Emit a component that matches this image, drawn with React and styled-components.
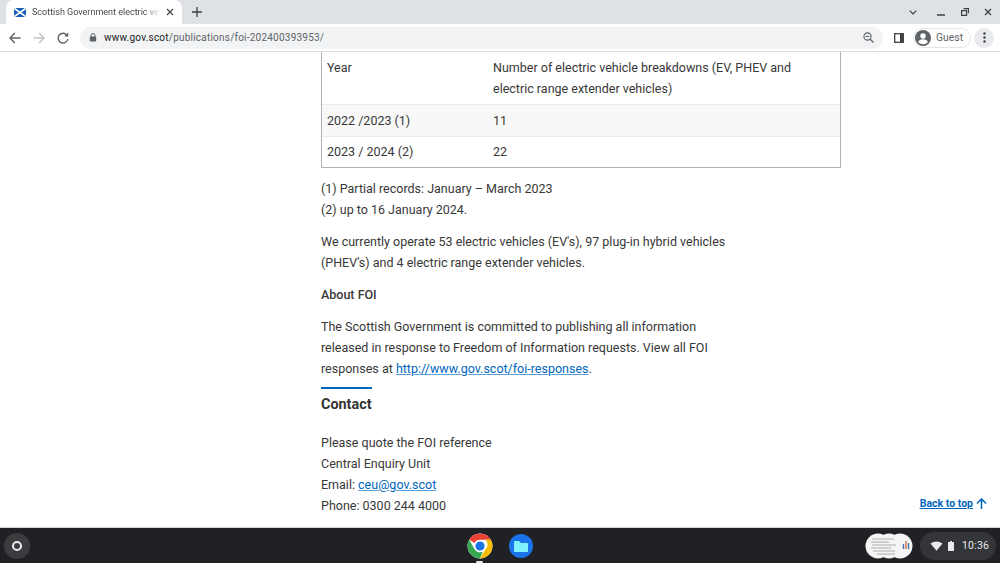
import React from "react";
import styled, { createGlobalStyle } from "styled-components";

const Global = createGlobalStyle`
  html, body { margin: 0; padding: 0; width: 1000px; height: 563px; overflow: hidden; background: #fff; }
  body { font-family: Roboto, "Liberation Sans", sans-serif; }
`;
const Screen = styled.div`width: 1000px; height: 563px; display: flex; flex-direction: column; overflow: hidden;`;
const TabStrip = styled.div`height: 24px; background: #dee1e6; display: flex; align-items: flex-end; flex: none;`;
const Tab = styled.div`
  position: relative; width: 176px; height: 24px; margin-left: 6px; background: #fff; border-radius: 8px 8px 0 0;
  display: flex; align-items: center; padding: 0 8px; box-sizing: border-box; gap: 6px;
`;
const TabTitle = styled.div`
  font-size: 9px; color: #45494e; width: 128px; white-space: nowrap; line-height: 24px;
  -webkit-mask-image: linear-gradient(90deg, #000 112px, transparent 128px);
`;
const NewTab = styled.div`margin-left: 5px; width: 20px; height: 24px; display: flex; align-items: center; justify-content: center;`;
const WindowControls = styled.div`margin-left: auto; height: 24px; display: flex; align-items: center; padding-right: 8px;`;
const WinIcon = styled.svg`margin-left: ${p => p.$gap || 0}px; display: block;`;
const Toolbar = styled.div`
  height: 27px; background: #fff; border-bottom: 1px solid #dadce0; display: flex; align-items: center; flex: none; padding: 0 6px 0 9px;
`;
const NavIcons = styled.div`display: flex; align-items: center; gap: 12px;`;
const Omnibox = styled.div`
  width: 803px; height: 22px; margin-left: 11px; border-radius: 11px; background: #f1f3f4; display: flex; align-items: center;
  padding: 0 9px 0 9px; box-sizing: border-box;
`;
const Url = styled.div`font-size: 10px; margin-left: 7px; letter-spacing: 0.022em; color: #5f6368; white-space: nowrap; b { font-weight: 400; color: #202124; }`;
const ZoomGlyph = styled.div`margin-left: auto; display: flex;`;
const RightTools = styled.div`display: flex; align-items: center; margin-left: 11px;`;
const PanelIcon = styled.svg`display: block; margin-right: 2px;`;
const Guest = styled.div`
  margin-left: 7px; height: 20px; width: 58px; border: 1px solid #e4e6e9; border-radius: 11px; display: flex; align-items: center; gap: 5px;
  box-sizing: border-box; padding-left: 1px; font-size: 10.4px; color: #5f6368;
`;
const MenuDot = styled.div`margin-left: 3px; width: 20px; height: 20px; border-radius: 50%; background: #e8eaed; display: flex; align-items: center; justify-content: center;`;
const Page = styled.main`
  position: relative; flex: 1; min-height: 0; overflow: hidden; padding-left: 321px; color: #383838; font-size: 12.5px; line-height: 21px;
`;
const Table = styled.div`width: 520px; box-sizing: border-box; border: 1px solid #b3b3b3; border-top: 0; margin-bottom: 10px;`;
const Row = styled.div`
  display: grid; grid-template-columns: 166px 1fr; padding: ${p => p.$py}; background: ${p => p.$alt ? "#f8f8f8" : "#fff"};
  border-top: ${p => p.$line ? "1px solid #ebebeb" : "0"};
`;
const Para = styled.p`margin: 0 0 ${p => p.$mb ?? 10.5}px; width: 420px;`;
const Strong = styled.p`margin: 0 0 11px; font-weight: 500; width: 420px;`;
const A = styled.a`color: #0065bd; text-decoration: underline; text-underline-offset: 1px; text-decoration-color: #5b9fd9;`;
const Rule = styled.div`width: 51px; height: 2px; background: #0065bd; margin-top: 8.5px;`;
const Heading = styled.h3`margin: 5px 0 17px; font-size: 14.4px; line-height: 21px; font-weight: 700; color: #333;`;
const BackToTop = styled.a`
  position: absolute; right: 13px; bottom: 13px; display: flex; align-items: center; gap: 3px; font-size: 10.5px; line-height: 21px; font-weight: 700; color: #0065bd;
  span { text-decoration: underline; }
`;
const Shelf = styled.footer`
  height: 36px; flex: none; background: #202124; border-top: 1px solid #d5d5d5; box-sizing: border-box; display: flex; align-items: center; position: relative;
`;
const Launcher = styled.div`margin-left: 4px; width: 26px; height: 26px; border-radius: 50%; background: #3b3c3e; display: flex; align-items: center; justify-content: center;`;
const LauncherRing = styled.div`width: 6px; height: 6px; border-radius: 50%; border: 2px solid #e8eaed;`;
const Apps = styled.div`margin-left: 437px; display: flex; align-items: center; gap: 16px; position: relative;`;
const ActiveDot = styled.div`position: absolute; left: 9px; bottom: -4px; width: 7px; height: 2px; background: #e8eaed; border-radius: 1px;`;
const Holding = styled.div`margin-left: auto; display: flex;`;
const Status = styled.div`
  margin: 0 4px 0 7px; width: 76px; height: 28px; box-sizing: border-box; border-radius: 14px; background: #333538; display: flex; align-items: center; padding-left: 10px;
  color: #e8eaed; font-size: 10.5px; gap: 5px; letter-spacing: .2px;
`;
const BatteryIcon = styled.svg`display: block; margin-right: 3px;`;

const Saltire = () => (
  <svg width="12" height="9" viewBox="0 0 12 9">
    <rect width="12" height="9" rx="1.5" fill="#1a5fb4" />
    <path d="M0.5 .5L11.5 8.5M11.5 .5L.5 8.5" stroke="#fff" strokeWidth="1.6" />
  </svg>
);
const Chrome = () => (
  <svg width="26" height="26" viewBox="0 0 48 48">
    <circle cx="24" cy="24" r="23" fill="#fff" />
    <path d="M24 1a23 23 0 0 1 19.9 11.5H24a11.5 11.5 0 0 0-10 5.8L4.1 12.5A23 23 0 0 1 24 1z" fill="#ea4335" />
    <path d="M43.9 12.5A23 23 0 0 1 24 47l10-17.2a11.5 11.5 0 0 0 0-17.3z" fill="#fbbc04" />
    <path d="M24 47A23 23 0 0 1 4.1 12.5L14 29.8a11.5 11.5 0 0 0 10 5.7l5-.7z" fill="#34a853" />
    <circle cx="24" cy="24" r="10.5" fill="#fff" />
    <circle cx="24" cy="24" r="8.5" fill="#1a73e8" />
  </svg>
);
const Files = () => (
  <svg width="24" height="24" viewBox="0 0 24 24">
    <circle cx="12" cy="12" r="12" fill="#1a73e8" />
    <path d="M5 8a1 1 0 0 1 1-1h4l2 2h6a1 1 0 0 1 1 1v7a1 1 0 0 1-1 1H6a1 1 0 0 1-1-1z" fill="#80f3ff" />
  </svg>
);

export default function App() {
  return (
    <Screen>
      <Global />
      <TabStrip>
        <Tab>
          <Saltire />
          <TabTitle>Scottish Government electric veh</TabTitle>
          <svg width="8" height="8" viewBox="0 0 8 8"><path d="M1 1l6 6M7 1L1 7" stroke="#45494e" strokeWidth="1.3" /></svg>
        </Tab>
        <NewTab><svg width="10" height="10" viewBox="0 0 10 10"><path d="M5 0v10M0 5h10" stroke="#3c4043" strokeWidth="1.3" /></svg></NewTab>
        <WindowControls>
          <WinIcon width="8" height="5" viewBox="0 0 8 5"><path d="M.7.7L4 4l3.3-3.3" fill="none" stroke="#3c4043" strokeWidth="1.2" /></WinIcon>
          <WinIcon $gap={20} width="8" height="8" viewBox="0 0 8 8"><path d="M0 7h8" stroke="#3c4043" strokeWidth="1.5" /></WinIcon>
          <WinIcon $gap={16} width="8" height="8" viewBox="0 0 8 8"><path d="M2.5.7h5v4.6M.6 2.6h5v4.8h-5z" fill="none" stroke="#3c4043" strokeWidth="1.2" /></WinIcon>
          <WinIcon $gap={15} width="8" height="8" viewBox="0 0 8 8"><path d="M1 1l6 6M7 1L1 7" stroke="#3c4043" strokeWidth="1.3" /></WinIcon>
        </WindowControls>
      </TabStrip>
      <Toolbar>
        <NavIcons>
          <svg width="12" height="12" viewBox="0 0 12 12"><path d="M11.5 6H1M5.8 1L1 6l4.8 5" fill="none" stroke="#5f6368" strokeWidth="1.4" /></svg>
          <svg width="12" height="12" viewBox="0 0 12 12"><path d="M.5 6H11M6.2 1L11 6l-4.8 5" fill="none" stroke="#bdc1c6" strokeWidth="1.3" /></svg>
          <svg width="12" height="12" viewBox="0 0 12 12"><path d="M10 3.2A4.9 4.9 0 1 0 10.9 7" fill="none" stroke="#5f6368" strokeWidth="1.4" /><path d="M11.3 .6v4H7.3z" fill="#5f6368" /></svg>
        </NavIcons>
        <Omnibox>
          <svg width="8" height="9" viewBox="0 0 8 9"><path d="M2 4V2.6a2 2 0 0 1 4 0V4" fill="none" stroke="#5f6368" strokeWidth="1" /><rect x=".8" y="3.6" width="6.4" height="5" rx=".8" fill="#5f6368" /></svg>
          <Url><b>www.gov.scot</b>/publications/foi-202400393953/</Url>
          <ZoomGlyph><svg width="11" height="11" viewBox="0 0 11 11"><circle cx="4.5" cy="4.5" r="3.6" fill="none" stroke="#5f6368" strokeWidth="1.1" /><path d="M7.2 7.2l3.3 3.3" stroke="#5f6368" strokeWidth="1.3" /><path d="M2.6 4.5h3.8" stroke="#5f6368" /></svg></ZoomGlyph>
        </Omnibox>
        <RightTools>
          <PanelIcon width="10" height="10" viewBox="0 0 10 10"><rect x=".7" y=".7" width="8.6" height="8.6" fill="none" stroke="#3c4043" strokeWidth="1.3" /><rect x="6" y="1" width="3" height="8" fill="#3c4043" /></PanelIcon>
          <Guest>
            <svg width="16" height="16" viewBox="0 0 16 16"><circle cx="8" cy="8" r="8" fill="#5f6368" /><circle cx="8" cy="6" r="2.7" fill="#fff" /><path d="M3 12c1-2.2 3-2.8 5-2.8s4 .6 5 2.8a6.7 6.7 0 0 1-10 0z" fill="#fff" /></svg>
            Guest
          </Guest>
          <MenuDot><svg width="3" height="11" viewBox="0 0 3 11"><circle cx="1.5" cy="1.5" r="1.2" fill="#3c4043" /><circle cx="1.5" cy="5.5" r="1.2" fill="#3c4043" /><circle cx="1.5" cy="9.5" r="1.2" fill="#3c4043" /></svg></MenuDot>
        </RightTools>
      </Toolbar>
      <Page>
        <Table>
          <Row $py="5px">
            <div>Year</div>
            <div>Number of electric vehicle breakdowns (EV, PHEV and<br />electric range extender vehicles)</div>
          </Row>
          <Row $py="5px" $alt $line><div>2022 /2023 (1)</div><div>11</div></Row>
          <Row $py="4px 5px 5px" $line><div>2023 / 2024 (2)</div><div>22</div></Row>
        </Table>
        <Para>(1) Partial records: January – March 2023<br />(2) up to 16 January 2024.</Para>
        <Para $mb={11}>We currently operate 53 electric vehicles (EV's), 97 plug-in hybrid vehicles<br />(PHEV's) and 4 electric range extender vehicles.</Para>
        <Strong>About FOI</Strong>
        <Para $mb={0}>The Scottish Government is committed to publishing all information<br />released in response to Freedom of Information requests. View all FOI<br />responses at <A href="#">http://www.gov.scot/foi-responses</A>.</Para>
        <Rule />
        <Heading>Contact</Heading>
        <Para>Please quote the FOI reference<br />Central Enquiry Unit<br />Email: <A href="#">ceu@gov.scot</A><br />Phone: 0300 244 4000</Para>
        <BackToTop href="#">
          <span>Back to top</span>
          <svg width="11" height="11" viewBox="0 0 11 11"><path d="M5.5 11V1M1 5.5L5.5 1 10 5.5" fill="none" stroke="#0065bd" strokeWidth="1.5" /></svg>
        </BackToTop>
      </Page>
      <Shelf>
        <Launcher><LauncherRing /></Launcher>
        <Apps><Chrome /><Files /><ActiveDot /></Apps>
        <Holding>
          <svg width="48" height="26" viewBox="0 0 48 26">
            <circle cx="13" cy="13" r="12.5" fill="#f4f4f4" /><circle cx="24" cy="13" r="12.5" fill="#f4f4f4" /><circle cx="35" cy="13" r="12.5" fill="#f4f4f4" />
            <path d="M7 6h22M6 9h18M7 12h24M6 15h20M8 18h22M12 21h18" stroke="#a5a7ab" strokeWidth=".9" />
            <path d="M38.5 16v-5M43.5 16v-6" stroke="#4a6fb0" strokeWidth="1.4" /><path d="M41 16V8" stroke="#d8713f" strokeWidth="1.4" />
          </svg>
        </Holding>
        <Status>
          <svg width="13" height="10" viewBox="0 0 13 10"><path d="M.5 2.5Q6.5-1.5 12.5 2.5L6.5 9.8z" fill="#e8eaed" /></svg>
          <BatteryIcon width="6" height="10" viewBox="0 0 6 10"><path d="M2 0h2v1h1.5a.5.5 0 0 1 .5.5v8a.5.5 0 0 1-.5.5h-5a.5.5 0 0 1-.5-.5v-8a.5.5 0 0 1 .5-.5H2z" fill="#e8eaed" /></BatteryIcon>
          10:36
        </Status>
      </Shelf>
    </Screen>
  );
}
